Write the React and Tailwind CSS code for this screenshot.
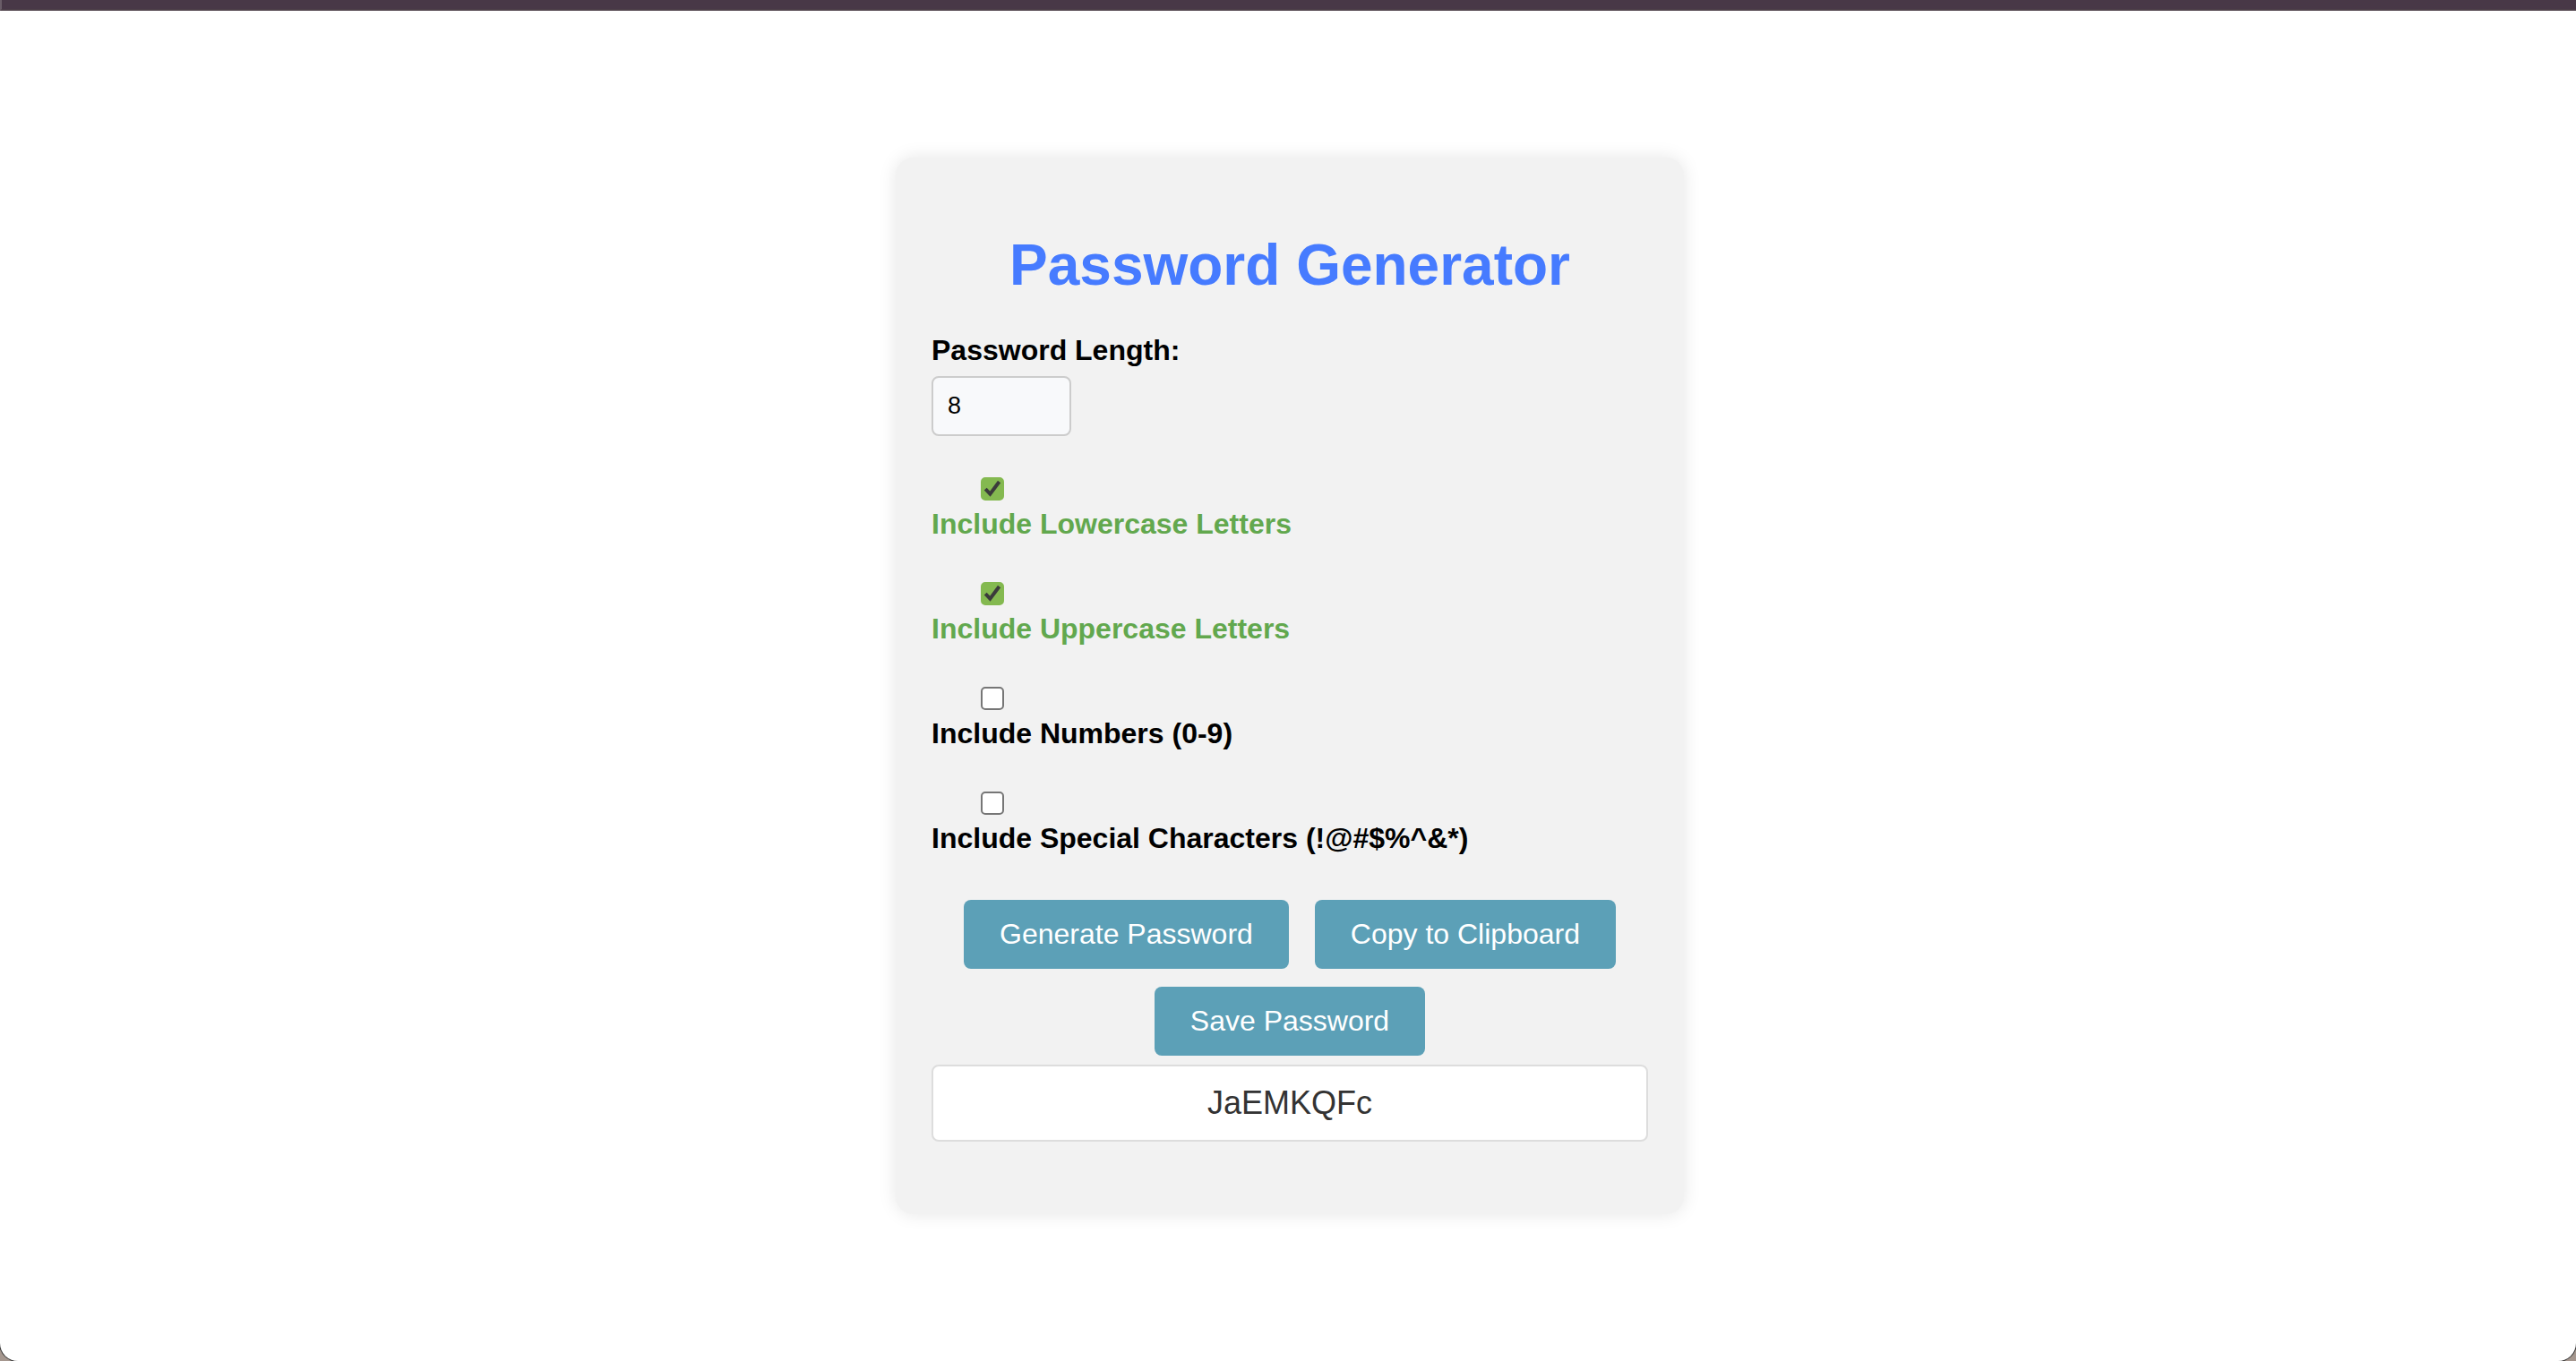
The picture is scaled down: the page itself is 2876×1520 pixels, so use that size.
import { useState } from "react";

const POOLS = {
  lower: "abcdefghijklmnopqrstuvwxyz",
  upper: "ABCDEFGHIJKLMNOPQRSTUVWXYZ",
  numbers: "0123456789",
  special: "!@#$%^&*",
};

const OPTIONS = [
  { id: "lower", label: "Include Lowercase Letters" },
  { id: "upper", label: "Include Uppercase Letters" },
  { id: "numbers", label: "Include Numbers (0-9)" },
  { id: "special", label: "Include Special Characters (!@#$%^&*)" },
];

function Option({ id, label, checked, onChange }) {
  return (
    <div>
      <div className="relative ml-[55px] size-[26px]">
        <input
          id={id}
          type="checkbox"
          checked={checked}
          onChange={onChange}
          className="block size-[26px] appearance-none rounded-[5px] border-2 border-[#767676] bg-white checked:border-[#84b950] checked:bg-[#84b950]"
        />
        {checked && (
          <svg
            viewBox="0 0 26 26"
            className="pointer-events-none absolute inset-0 size-[26px]"
            fill="none"
            stroke="#3b3b3b"
            strokeWidth="4"
          >
            <path d="M5.2 13.2 L10.4 18.6 L20.6 5" />
          </svg>
        )}
      </div>
      <label
        htmlFor={id}
        className={
          checked
            ? "mt-2 block text-[32px] leading-9 font-bold text-[#62a84e]"
            : "mt-2 block text-[32px] leading-9 font-bold text-black"
        }
      >
        {label}
      </label>
    </div>
  );
}

function ActionButton({ children, onClick }) {
  return (
    <button
      type="button"
      onClick={onClick}
      className="rounded-lg bg-[#5ca0b7] px-10 py-5 text-[32px] leading-[37px] text-white"
    >
      {children}
    </button>
  );
}

export default function App() {
  const [length, setLength] = useState(8);
  const [options, setOptions] = useState({
    lower: true,
    upper: true,
    numbers: false,
    special: false,
  });
  const [password, setPassword] = useState("JaEMKQFc");

  const toggle = (id) => setOptions({ ...options, [id]: !options[id] });

  const generate = () => {
    const pool = OPTIONS.filter((o) => options[o.id])
      .map((o) => POOLS[o.id])
      .join("");
    let next = "";
    for (let i = 0; pool && i < length; i++) {
      next += pool[Math.floor(Math.random() * pool.length)];
    }
    setPassword(next);
  };

  const copy = () => navigator.clipboard?.writeText(password);
  const save = () => localStorage.setItem("password", password);

  return (
    <div className="bg-[#a5978f] font-['Liberation_Sans',Arial,sans-serif] text-black">
      <div className="flex min-h-screen flex-col rounded-b-[20px] bg-white shadow-[0_0_0_1px_#333]">
        <header className="h-3 border-b-2 border-l-2 border-b-[#4d4049] border-l-[#6a5d68] bg-[#483847]" />
        <main className="flex flex-1 items-center justify-center pl-1">
          <section className="w-full max-w-[880px] rounded-[20px] bg-[#f2f2f2] px-10 pt-[83px] pb-[81px] shadow-[0_0_20px_rgba(0,0,0,0.1)]">
            <h1 className="mb-10 text-center text-[64px] leading-[74px] font-bold text-[#467bff]">
              Password Generator
            </h1>
            <label htmlFor="length" className="block text-[32px] leading-9 font-bold">
              Password Length:
            </label>
            <input
              id="length"
              type="text"
              inputMode="numeric"
              value={length}
              onChange={(e) => setLength(e.target.value)}
              className="mt-[11px] mb-[46px] block h-[67px] w-[156px] rounded-lg border-2 border-[#ccc] bg-[#f8f9fb] px-4 text-[27px]"
            />
            <div className="flex flex-col gap-[47px]">
              {OPTIONS.map((o) => (
                <Option
                  key={o.id}
                  id={o.id}
                  label={o.label}
                  checked={options[o.id]}
                  onChange={() => toggle(o.id)}
                />
              ))}
            </div>
            <div className="mt-[51px] flex flex-wrap justify-center gap-x-[29px] gap-y-5">
              <ActionButton onClick={generate}>Generate Password</ActionButton>
              <ActionButton onClick={copy}>Copy to Clipboard</ActionButton>
              <ActionButton onClick={save}>Save Password</ActionButton>
            </div>
            <input
              type="text"
              readOnly
              aria-label="Generated password"
              value={password}
              className="mt-2.5 block h-[86px] w-full rounded-lg border-2 border-[#ddd] bg-white text-center text-[36px] text-[#333]"
            />
          </section>
        </main>
      </div>
    </div>
  );
}
